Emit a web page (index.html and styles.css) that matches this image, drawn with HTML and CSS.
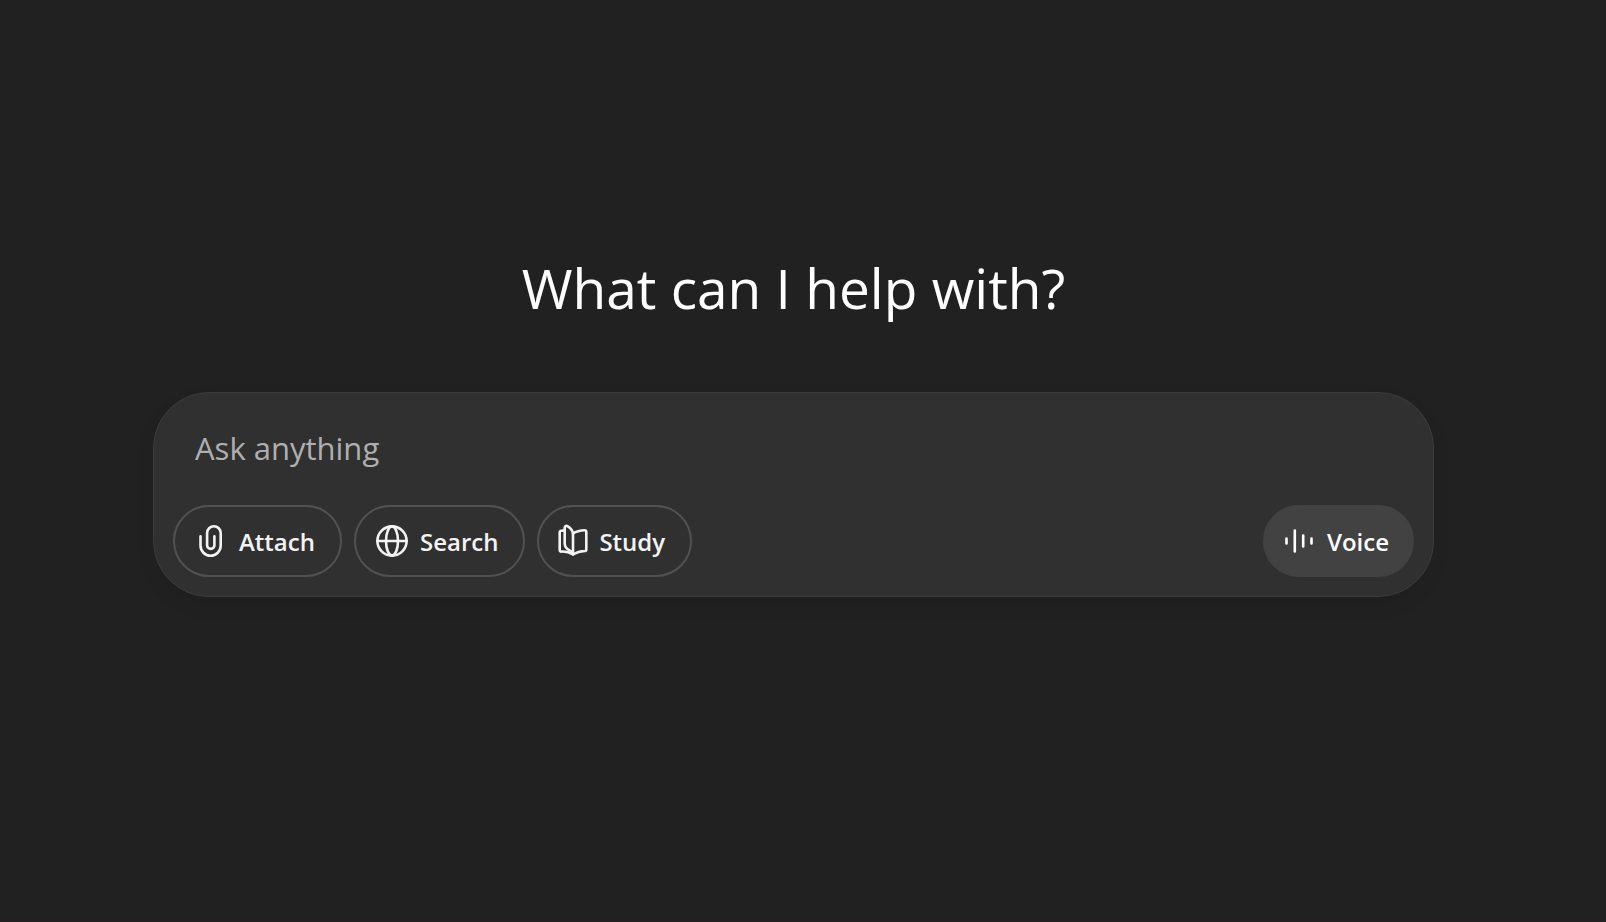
FILE: index.html
```
<!DOCTYPE html>
<html lang="en">
<head>
    <meta charset="UTF-8">
    <meta name="viewport" content="width=device-width, initial-scale=1.0">
    <title>Chat</title>
    <link rel="stylesheet" href="styles.css">
</head>
<body>
    <main class="page">
        <h1 class="title">What can I help with?</h1>
        <form class="composer">
            <input class="prompt" type="text" placeholder="Ask anything" aria-label="Ask anything">
            <div class="actions">
                <button type="button" class="pill">
                    <svg class="icon" viewBox="0 0 36 36" aria-hidden="true">
                        <path d="M7.5 13.3V22.6a10.1 10.1 0 0 0 20.2 0V10.1a6.8 6.8 0 0 0-13.6 0V22.2a3.65 3.65 0 0 0 7.3 0V13.3"/>
                    </svg>
                    Attach
                </button>
                <button type="button" class="pill">
                    <svg class="icon" viewBox="0 0 36 36" aria-hidden="true">
                        <circle cx="18" cy="18" r="14.6"/>
                        <ellipse cx="18" cy="18" rx="6" ry="14.6"/>
                        <path d="M3.4 18h29.2"/>
                    </svg>
                    Search
                </button>
                <button type="button" class="pill study">
                    <svg class="icon" viewBox="0 0 36 36" aria-hidden="true">
                        <path d="M9.7 7.4L6.2 7.8Q4.7 8 4.7 9.5V27.1Q4.7 28.6 6.2 28.6Q13 28.3 18 31.4Q23 28.3 29.8 28Q31.3 27.9 31.3 26.4V8.8Q31.3 7.2 29.7 7.3Q22.5 7.6 18 10.5"/>
                        <path d="M18 31.4V10.5C17.5 7.5 15.5 4.8 12.8 3.3Q9.7 2 9.7 5V20.5C9.7 24.5 12.5 26.5 15 27.7Q17.5 29 18 31.4"/>
                    </svg>
                    Study
                </button>
                <button type="button" class="pill voice">
                    <svg class="icon" viewBox="0 0 36 36" aria-hidden="true">
                        <path d="M5.5 15.5v5M13.8 7.5v21M22.2 12.5v11M30.5 15.5v5"/>
                    </svg>
                    Voice
                </button>
            </div>
        </form>
    </main>
</body>
</html>
```
FILE: styles.css
```
* {
    box-sizing: border-box;
}
body {
    margin: 0;
    min-height: 100vh;
    background-color: #212121;
    border-bottom: 1px solid #2a1f25;
    color: #fff;
    font-family: "Segoe UI", "Open Sans", sans-serif;
}
.page {
    display: flex;
    flex-direction: column;
    align-items: center;
    gap: 68px;
    padding: 252px 172px 0 153px;
}
.title {
    margin: 0;
    font-size: 55px;
    font-weight: 400;
    line-height: 72px;
}
.composer {
    display: flex;
    flex-direction: column;
    gap: 33px;
    width: 100%;
    padding: 31px 19px 19px;
    background-color: #303030;
    border: 1px solid #3c3c3c;
    border-radius: 56px;
    box-shadow: 0 8px 20px rgba(0, 0, 0, 0.06);
}
.prompt {
    height: 48px;
    margin: 0 22px;
    padding: 0;
    background: none;
    border: none;
    outline: none;
    color: #fff;
    font-family: inherit;
    font-size: 31px;
}
.prompt::placeholder {
    color: #afafaf;
    opacity: 1;
}
.actions {
    display: flex;
    gap: 12px;
}
.pill {
    display: flex;
    align-items: center;
    gap: 10px;
    height: 72px;
    padding: 0 25px 0 18px;
    background: none;
    border: 2px solid #545050;
    border-radius: 36px;
    color: #f3f3f3;
    font-family: inherit;
    font-size: 24px;
    font-weight: 600;
    cursor: pointer;
}
.study {
    gap: 8px;
    padding-left: 16px;
}
.voice {
    margin-left: auto;
    padding: 0 23px 0 16px;
    background-color: #424242;
    border-color: #424242;
    color: #fff;
}
.icon {
    width: 36px;
    height: 36px;
    fill: none;
    stroke: currentColor;
    stroke-width: 2.6;
    stroke-linecap: round;
    stroke-linejoin: round;
}
```
